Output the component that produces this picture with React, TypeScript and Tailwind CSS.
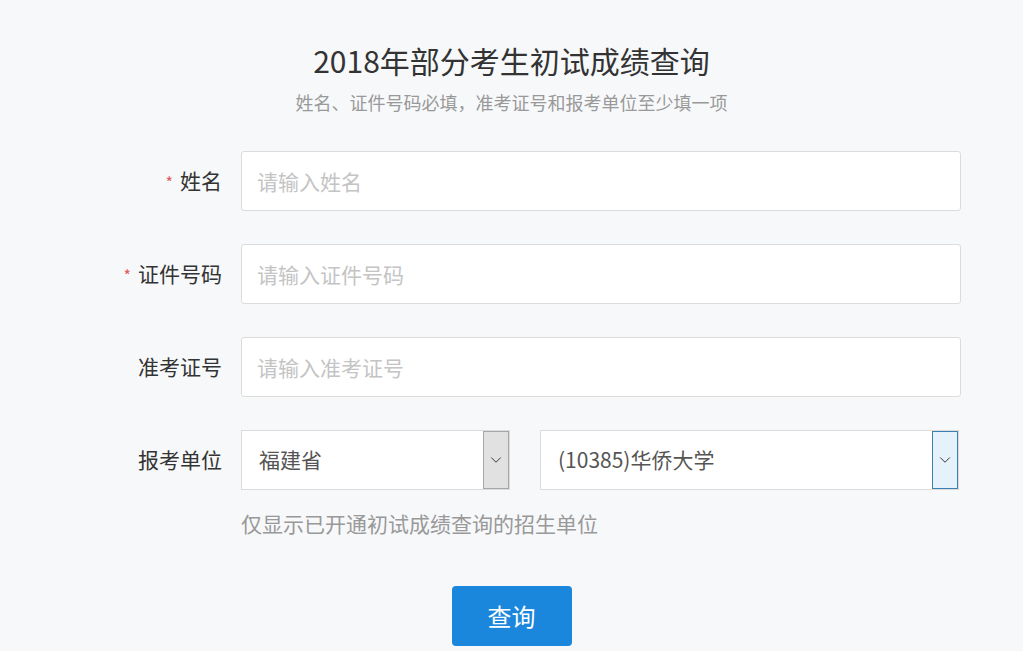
import { ChevronDown } from "lucide-react";

const font = { fontFamily: '"Noto Sans CJK SC", "Liberation Sans", sans-serif' };

function Label({ text, required }: { text: string; required?: boolean }) {
  return (
    <div className="w-[241px] shrink-0 pr-[19px] text-right text-[21px] text-[#333]">
      {required && <span className="mr-[7px] text-[16px] text-[#e05a5a]">*</span>}
      {text}
    </div>
  );
}

function Field({ placeholder }: { placeholder: string }) {
  return (
    <input
      className="h-[60px] w-[720px] rounded-[3px] border border-[#dcdcdc] bg-white px-[15px] text-[21px] text-[#555] outline-none placeholder:text-[#c4c4c4]"
      placeholder={placeholder}
    />
  );
}

function FakeSelect({ value, width, focused }: { value: string; width: string; focused?: boolean }) {
  return (
    <div className={`flex h-[60px] ${width} items-stretch border border-[#dcdcdc] bg-white`}>
      <div className="flex flex-1 items-center pl-[17px] text-[21px] text-[#555]">{value}</div>
      <div
        className={`flex w-[26px] items-center justify-center border ${
          focused ? "border-[#3c7fb1] bg-[#e5f1fb]" : "border-[#a6a6a6] bg-[#e1e1e1]"
        }`}
      >
        <ChevronDown className="h-[18px] w-[18px] text-[#333]" strokeWidth={1.3} />
      </div>
    </div>
  );
}

export default function App() {
  return (
    <div className="min-h-[651px] w-full bg-[#f7f8fa] pt-[40px]" style={font}>
      <h1 className="text-center text-[30px] leading-[40px] text-[#333]">2018年部分考生初试成绩查询</h1>
      <p className="mt-[10px] text-center text-[18px] leading-[24px] text-[#999]">
        姓名、证件号码必填，准考证号和报考单位至少填一项
      </p>

      <div className="mt-[37px] flex flex-col gap-[33px]">
        <div className="flex items-center">
          <Label text="姓名" required />
          <Field placeholder="请输入姓名" />
        </div>
        <div className="flex items-center">
          <Label text="证件号码" required />
          <Field placeholder="请输入证件号码" />
        </div>
        <div className="flex items-center">
          <Label text="准考证号" />
          <Field placeholder="请输入准考证号" />
        </div>
        <div className="flex items-center">
          <Label text="报考单位" />
          <div className="flex gap-[30px]">
            <FakeSelect value="福建省" width="w-[269px]" />
            <FakeSelect value="(10385)华侨大学" width="w-[419px]" focused />
          </div>
        </div>
      </div>

      <p className="mt-[19px] pl-[241px] text-[21px] leading-[28px] text-[#999]">仅显示已开通初试成绩查询的招生单位</p>

      <div className="mt-[49px] flex justify-center">
        <button className="h-[60px] w-[120px] rounded-[4px] bg-[#1a87dd] text-[24px] text-white">查询</button>
      </div>
    </div>
  );
}
